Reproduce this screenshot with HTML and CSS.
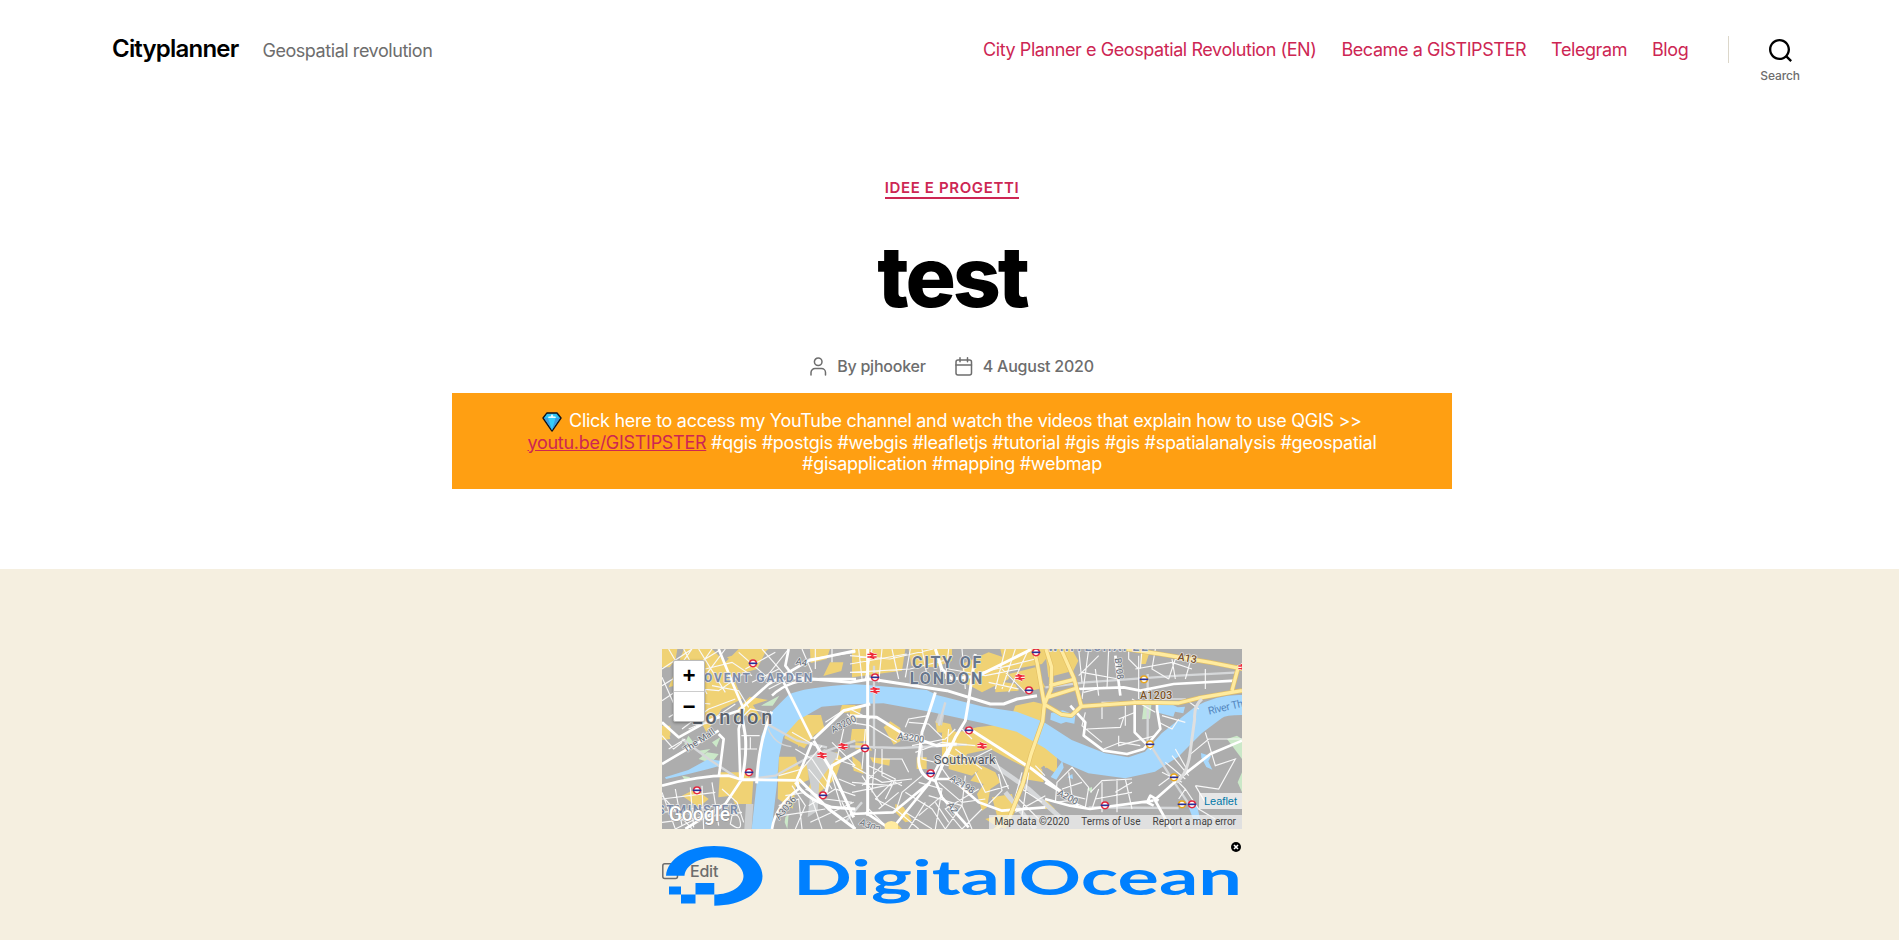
FILE: index.html
```html
<!DOCTYPE html>
<html lang="en">
<head>
<meta charset="utf-8">
<title>test – Cityplanner</title>
<link rel="stylesheet" href="styles.css">
</head>
<body>
<div class="page">
  <header class="site-header">
    <div class="titles">
      <a class="site-title">Cityplanner</a>
      <span class="site-description">Geospatial revolution</span>
    </div>
    <nav class="menu">
      <a>City Planner e Geospatial Revolution (EN)</a>
      <a>Became a GISTIPSTER</a>
      <a>Telegram</a>
      <a>Blog</a>
    </nav>
    <button class="search">
      <svg width="23" height="23" viewBox="0 0 23 23"><path d="M38.710696,48.0601792 L43,52.3494831 L41.3494831,54 L37.0601792,49.710696 C35.2632422,51.1481185 32.9839107,52.0076499 30.5038249,52.0076499 C24.7027226,52.0076499 20,47.3049272 20,41.5038249 C20,35.7027226 24.7027226,31 30.5038249,31 C36.3049272,31 41.0076499,35.7027226 41.0076499,41.5038249 C41.0076499,43.9839107 40.1481185,46.2632422 38.710696,48.0601792 Z M36.3875844,47.1716785 C37.8030221,45.7026647 38.6734666,43.7048964 38.6734666,41.5038249 C38.6734666,36.9918565 35.0157934,33.3341833 30.5038249,33.3341833 C25.9918565,33.3341833 22.3341833,36.9918565 22.3341833,41.5038249 C22.3341833,46.0157934 25.9918565,49.6734666 30.5038249,49.6734666 C32.7048964,49.6734666 34.7026647,48.8030221 36.1716785,47.3875844 Z" transform="translate(-20 -31)"/></svg>
      <span>Search</span>
    </button>
  </header>

  <section class="entry-header">
    <a class="category">Idee e progetti</a>
    <h1>test</h1>
    <ul class="meta">
      <li><svg width="17" height="19" viewBox="0 0 17 19" class="line"><path d="M1 18v-2.500a4 4 0 0 1 4-4h6.500a4 4 0 0 1 4 4V18"/><circle cx="8.200" cy="4.800" r="3.800"/></svg>By pjhooker</li>
      <li><svg width="18" height="19" viewBox="0 0 18 19" class="line"><rect x="1" y="3" width="15.500" height="15" rx="2"/><path d="M1 8h15.500M5 .8v4M12.500 .8v4"/></svg>4 August 2020</li>
    </ul>
    <p class="banner"><svg class="gem" width="20" height="20" viewBox="0 0 20 20"><path d="M5 1h10l4 5-9 13L1 6z" fill="#25b8ec" stroke="#10131c" stroke-width="1.400" stroke-linejoin="round"/><path d="M2 6h16l-8 12z" fill="#3c9ce0"/><path d="M6 6l4 12 3.500-12z" fill="#35cdfa"/><path d="M5 2h9l3 4H2.500z" fill="#2ec4f2"/><path d="M6 6l1-2 1 1 2-3 2 3 1-1 1 2z" fill="#e9fbff"/></svg> Click here to access my YouTube channel and watch the videos that explain how to use QGIS &gt;&gt;<br><a>youtu.be/GISTIPSTER</a> #qgis #postgis #webgis #leafletjs #tutorial #gis #gis #spatialanalysis #geospatial<br>#gisapplication #mapping #webmap</p>
  </section>

  <main class="content">
    <div class="map">
      <svg class="tiles" width="580" height="180" viewBox="0 0 1740 540">
        <defs>
          <g id="tube"><circle r="10" fill="#fff" stroke="#e32940" stroke-width="4.500"/><path d="M-13 0h26" stroke="#2b2f94" stroke-width="5"/></g>
          <g id="over"><circle r="10" fill="#fff" stroke="#e9a820" stroke-width="4.500"/><path d="M-13 0h26" stroke="#2b2f94" stroke-width="5"/></g>
          <g id="rail"><path d="M-14-4h28M-14 4h28M-7-9L6-4-6 4 7 9" fill="none" stroke="#fff" stroke-width="7"/><path d="M-14-4h28M-14 4h28M-7-9L6-4-6 4 7 9" fill="none" stroke="#ee2737" stroke-width="4"/></g>
        </defs>
        <rect width="1740" height="540" fill="#adadad"/>
        <g fill="#f0d274">
          <path d="M0 0h46l-5 30-18 25H0zM66 0h84l40 40 40-40h85l-30 60-70 20-40 50 10 20-60-10-30-45-75 20zM120 90l48 25 15 60-50 75-20-40-20-60zM0 230h25v30H0zM150 75l70 25 20 50-60 30zM195 25l80-25h45l-80 60zM444 0h60l-10 30-48 12zM504 40h40l-6 26-54 15z"/>
          <path d="M228 178l35-35 55 10-45 15 25 40-15 15-40-30-25 20zM377 218l40-20 60 0 10 40-30 20-30 40-60-30zM540 168h40v20l-48 5zM350 323h50l10 30 30-10v50l-38 16-10 70-45-30zM174 370h90v20h10l-5 75h-50l-10-25-40 5zM480 320l45-10 15 20-20 60-60 50-20-25zM400 260l30-10-20 45zM60 440l40-20 40 30-30 25zM0 250l20 0 5 20-25 3z"/>
          <path d="M570 0h160l-10 65-150 20zM740 0h130v35l-50 20-72-5zM900 45l80-35 60 20v60l-80 40-55-30zM1015 0h160l-35 45-110 20zM1040 75l80-20 30 60-60 15zM1000 95l60 10 10 20-70 5zM1060 170l55-12 30 8-5 54-95-10zM564 170l36 0-10 35-26 10zM665 235l20-18 30 20v40l-20 10z"/>
          <path d="M840 240l50 10 55-15 85-10 80 40 75 50v60l-40-25-25 20-70-35-65-35-70 15-10 30-65-10zM820 215l45 10 10 30-50-5zM570 240h50l-5 35-50 5zM580 280l40 5 10 20-50-5zM860 320l70 5 30 30-30 25-70-20zM960 350l40 20 15 30-30 20-10 55-15 10-15-50 20-30-40-10zM764 325h30v35h-30zM700 465l25 10 25 40-20 5-30-30zM670 540l10-15 20-5 20 20zM990 445l60-10 10 50-30 55-30-10-30-20 35-10zM1090 330l50 30 5 40-60-10z"/>
          <path d="M1149 300l32 15 3 30-35 12zM1149 450l30 30-30 0zM1149 0h80l20 35-15 30-75 20zM1436 15l25 0-10 30-14 0zM624 325l60 5-2 20-50-10zM570 320l25 20 10 35-30-10z"/>
        </g>
        <path d="M432 340l55-40 45 15-60 80-5 90-30 20 10-90zM252 465h22l-5 75h-22zM840 165l15-10-15 75-20-10z" fill="#cdcfd0"/>
        <g fill="#cbe8c8">
          <path d="M67 285l12-25 14 18-10 15zM110 305l35-5-25 20zM150 280l25-15-12 30zM110 330l25-20 35 5-20 25-22-4zM60 380l25 5-15 12zM297 170l55-30-20 30zM370 505l10-10-4 45-8-20zM1446 163l22 4-4 42-24 2zM1275 420l15-6 0 18zM1725 260l-30 10 45 60V270zM1727 400l13-30v60z"/>
        </g>
        <g fill="#a6d8fd">
          <path d="M269 540L284 403 297 263 329 188 379 138Q420 115 579 106L614 108 794 123 824 138 964 173 1064 188 1144 218 1229 273 1329 313 1399 325 1449 308 1499 253 1599 173Q1670 135 1740 138V198Q1690 198 1679 208L1619 253 1549 323 1479 368 1389 388 1279 373 1199 338 1149 298 1064 248 964 223 804 188 664 163 564 166 479 173 409 213 364 263 351 323 344 413 329 540z"/>
          <path d="M9 385l70-22 60-33 35 5 0 15-35 10-60 15-67 15zM1167 192l35-8 38 15-3 25-25-5-15 5-32-12zM1487 160h30l30 15 22-2-5 20-25-5-5 15-45-12zM1166 384l35-48 4 20-22 36zM1617 312l30 10-8 15 12 25-18-8-15-28zM1216 385l15-10 2 15zM1580 475l25-5 12 50-20 0z"/>
        </g>
        <g fill="none" stroke="#d6d8da" stroke-width="7">
          <path d="M60 270l80 60 90 60M230 395l110-15 100-55 140-50M564 292l150 5 200-10M636 50v250M830 230l20-70M1150 115l120-15 280-20 180-10M1280 475l270 2M1457 75v200l70 110 60 90M315 225l90 50 90 20M600 460l-50 60"/>
          <path d="M318 238q20 50 70 55" stroke-width="4"/>
          <path d="M970 330l130 90 100 90M1030 430l90 110" stroke-width="14"/>
        </g>
        <g fill="none" stroke="#f8f8f8" stroke-width="3.500">
          <path d="M0 60l90-60M0 110L170 5M20 0l75 130M65 0l70 135M110 0l80 130M0 85l40 90M40 40l50 110M0 155l60-40 110 10 80-55M20 205l75-45 50 5M130 60l80-20 60 40M150 110l80 15 30 50M230 10l80 70M250 60l90-50M270 100l80-40M300 0l70 80M320 120l60-30M380 0l-80 100M420 0l30 70M460 0v60M510 0v40M440 30l140-20M130 225l90-60M60 240l80-60 80-30M90 0l-50 70M150 0l-60 85M190 0l-60 80"/>
          <path d="M0 260l35 40 25-20M20 300l50-30M80 240l70-30M235 210l30-30 50 10M238 260h55M235 300h50M265 265v35M0 430l40 110M40 420l20 110M85 415l10 120M120 410l5 130M150 400l20 130M0 450l160-20M0 490l210-25M0 520l240-30M180 420l45 40 20 60M210 500q20-10 25 20t-30 5zM0 440l90 100M40 540l140-70"/>
          <path d="M350 380l70-20 60-70M370 440l60-10M400 300l50 30 60 90M390 250l70 40M350 470l60-20 10 90M360 500l130-20M390 410l40 60-30 70M430 420l60 30 80 10M440 470l80-50 60 20M445 520l130-60M450 450l30 90M520 330l60 20M530 390l50 20M500 350l40 130M510 280l70 70M545 240l-20 90M440 360l50 60M520 520l60-30M540 460l40 80M490 220l60-40M555 195l30 30"/>
          <path d="M564 45l170-30M564 20l120 10 130-30M590 0l10 90M630 0l-20 90M660 0l-10 100M690 0l20 90M745 0l-15 85M564 70l180-10 120-30M780 0l15 80M820 0l20 80M860 0l-10 90M900 0l10 120M1030 0l-30 120M1060 0l-40 120M1100 0l-60 130M960 70l160-40M860 60l110 20 100-20M980 100l90 20M1010 50l80 80"/>
          <path d="M564 180l60 30M564 220l60 10 80 50M610 240l-10 120M640 300l-10 130M660 330h60l20 40M660 300v80l60 30M570 350l90 50 90-10M570 400l120 10M600 380l60 90M620 350l80 40-30 60M570 430l150-30M640 450l50-50M650 480l60-50M660 350l-60 60M740 220l60 5 40 40M730 235l10-25 60-10M750 290l100-20 30-30M780 280v50l80 20M760 310l80-30 100 10M820 330l50 70M860 240l-10 100M900 240l30 30M850 310l60 30 80-40M880 300l80 60"/>
          <path d="M620 480l60 60M640 450l60 30 70 60M700 490l20-60 60-50M730 430l80 50 40 60M770 400l70 20-20 120M770 500l70-60M730 490l80 50M740 540l50-80M800 440l100 30-50 70M830 400l70 60 70-10M820 460l40 60M910 380l-10 90M940 370l30 60 70-20M900 540l-50-60 100-60M930 540l-30-70M960 480l-60 60M1010 375l10 50-40 40M1000 330l40 90M1080 370l-30 110M1080 420l60 40M1070 450l60 60M1100 370l-20 130M1120 350l29 30M1060 490l90-50"/>
          <path d="M1250 0l10 100M1280 0l-20 150M1310 20l-60 60M1260 70l110 20M1300 60l10 80M1340 0l-5 120M1400 0v30l30 30M1420 60l110-20 60 20M1440 0l-5 60M1480 0l-10 60 50 30M1530 30l10 60M1590 20l-20 70M1630 60v60M1430 20v130M1520 90l20-60 60 10M1265 130l60-15M1270 190l-10 40 60 50M1275 240l100-5 10-30M1320 210v-50h50M1370 260v30l110-30M1370 210l50-20M1390 170v60M1500 150h70l40 30M1500 200l70 20M1410 150l70 40M1325 300l50-20 60 10M1490 220l40 20 20-30"/>
          <path d="M1185 400l45-45 50 60-10 60-50-20-40 5zM1200 420l60-20M1220 370l10 70 40 10M1285 430l35-35 90-5M1320 400v90M1365 390v100M1390 390l20 90M1410 400l-50 30M1300 450l110-20M1290 480l20-60M1510 340l60 50M1530 320l50 60M1500 370l60 30M1540 300l40 70M1490 410l40-30 40 40-20 30M1580 320l60-50 100 0M1630 250l30 100 60-20-50 90-70-10M1570 420l40 60 50 30M1600 410l30 50"/>
        </g>
        <g fill="none" stroke="#fff" stroke-width="8" stroke-linejoin="round">
          <path d="M170 0l45 110 30 70-15 60 5 150M0 220l50 45 90-50 90-30 90-80 120-70 140-30M0 345l170-100M170 255l15 15-10 80-5 35M0 410q110-30 200-30l40 12 165 2M240 390l-50 75-120 75M360 90l90 180M450 280l-45 110 5 30q-70 50-80 120M380 0l-10 50 30 40M330 140q50-50 150-50l102 0"/>
          <path d="M240 390q15-70 10-130M250 260l-10-60M284 403q5-120 45-215M455 275l60 100 60 130M455 270l90-85 80-20M410 390l90 90 80 60M490 440l20-90 110-60M400 400q30 50 110 75l70 5" stroke-width="9"/>
          <path d="M390 85l175 15 60-10 230 35 130 40 40 0 40-15 60-10M820 0l20 60 30 30 80-10 100-50 60-30M617 0v500M564 200l80 5 80 50 100 35 60-5M820 130q-15 50-40 120l-10 80q0 55 50 65l60-130 30-50 10-60 20-140M915 235l55 35 140 90 90 70" stroke-width="9"/>
          <path d="M870 285l-40 60-30 60-110 135M564 495l130-5 110-90M610 490l75 50M820 395l20 50 80 90M820 390h50l80 70 70 25 130-10" stroke-width="8"/>
          <path d="M1149 450l75 20 60 10 190-25M1149 400l60 35 40 35M1475 455l80-70 90-70 95-40M1477 450l50 90M1225 170l45 50-5 40 60 45 70 10 50-15 50-60-10-60V160M1418 160v90l50 50M1245 120l140-5 50 10 100-20 185-10M1490 455l-25-15-10 20 20 10M1375 140l-15-120" stroke-width="8"/>
        </g>
        <g fill="none" stroke-linejoin="round">
          <path d="M1258 172l172-12 120 2 60-15 130-22M1394 0l100 15 150 25 100 20M1162 110l72-18M1155 145l90-28M1197 0l39 88 22 84-30 28-30-4-51-30M1152 0l17 55-2 65-20 46M1115 0l10 40 22 126-5 50-35 100-25 90-40 100-70 60M1730 50l-20 75" stroke="#e4c064" stroke-width="14"/>
          <path d="M1258 172l172-12 120 2 60-15 130-22M1394 0l100 15 150 25 100 20M1162 110l72-18M1155 145l90-28M1197 0l39 88 22 84-30 28-30-4-51-30M1152 0l17 55-2 65-20 46M1115 0l10 40 22 126-5 50-35 100-25 90-40 100-70 60M1730 50l-20 75" stroke="#ffeb9f" stroke-width="10"/>
          <path d="M1620 150q-25 20-22 60l-15 110q-10 60-40 80" stroke="#dfdfdf" stroke-width="9"/>
        </g>
        <path d="M668 525q20-18 40 0v15h-40z" fill="#ffeb9f"/>
        <g class="labels" stroke="#e8e8e8" stroke-width="4" stroke-linejoin="round">
          <text x="97" y="98" font-size="36" font-weight="700" fill="#7b8ba8" textLength="354">COVENT GARDEN</text>
          <text x="89" y="224" font-size="60" font-weight="500" fill="#59626e" textLength="242">London</text>
          <text x="-40" y="494" font-size="36" font-weight="700" fill="#7b8ba8" textLength="267">ESTMINSTER</text>
          <text x="750" y="57" font-size="48" font-weight="700" fill="#68778d" textLength="208">CITY OF</text>
          <text x="743" y="105" font-size="48" font-weight="700" fill="#68778d" textLength="218">LONDON</text>
          <text x="1157" y="7" font-size="36" font-weight="700" fill="#7b8ba8" textLength="300">WHITECHAPEL</text>
          <text x="815" y="346" font-size="39" fill="#4e565f" textLength="186">Southwark</text>
          <g fill="#5f6873" font-size="28">
            <text transform="translate(400 45) rotate(12)">A4</text>
            <text transform="translate(72 312) rotate(-34)">The Mall</text>
            <text transform="translate(513 252) rotate(-27)">A3200</text>
            <text transform="translate(705 270) rotate(8)">A3200</text>
            <text transform="translate(352 514) rotate(-50)">A3036</text>
            <text transform="translate(862 392) rotate(32)">A2198</text>
            <text transform="translate(854 468) rotate(55)">A2</text>
            <text transform="translate(590 526) rotate(24)">A302</text>
            <text transform="translate(1184 437) rotate(28)">A200</text>
            <text transform="translate(1358 28) rotate(83)">B108</text>
          </g>
          <g fill="#7a5126" font-size="32" font-weight="500"><text transform="translate(1546 33) rotate(10)">A13</text><text x="1434" y="151" textLength="97">A1203</text></g>
          <text transform="translate(1641 197) rotate(-13)" font-size="32" fill="#5487bd" stroke="none" textLength="150">River Tham</text>
        </g>
        <use href="#tube" x="273" y="43"/><use href="#tube" x="261" y="370"/><use href="#tube" x="105" y="424"/><use href="#tube" x="483" y="439"/><use href="#tube" x="639" y="85"/><use href="#tube" x="609" y="298"/><use href="#tube" x="806" y="373"/><use href="#tube" x="921" y="244"/><use href="#tube" x="1101" y="124"/><use href="#tube" x="1122" y="10"/><use href="#tube" x="1329" y="469"/><use href="#tube" x="1590" y="466"/>
        <use href="#over" x="1446" y="91"/><use href="#over" x="1464" y="286"/><use href="#over" x="1536" y="385"/><use href="#over" x="1560" y="466"/>
        <use href="#rail" x="480" y="319"/><use href="#rail" x="543" y="292"/><use href="#rail" x="630" y="20"/><use href="#rail" x="639" y="124"/><use href="#rail" x="1074" y="85"/><use href="#rail" x="960" y="290"/><use href="#rail" x="1743" y="55"/>
        <text x="20" y="516" class="brand" textLength="184">Google</text>
      </svg>
      <div class="zoom-control"><a>+</a><a>−</a></div>
      <div class="leaflet">Leaflet</div>
      <div class="credits"><span>Map data ©2020</span><span>Terms of Use</span><span>Report a map error</span></div>
    </div>
    <div class="below">
      <p class="edit"><svg width="17" height="17" viewBox="0 0 17 17" class="line"><rect x=".8" y=".8" width="14.700" height="14.700" rx="2"/></svg>Edit</p>
      <svg class="sponsor" width="580" height="72" viewBox="0 0 580 72">
        <g fill="#0080ff">
          <path d="M52.300 69.700V58.500C69 58.500 81.500 50 81.500 40 81.500 29.500 68.500 21.500 52.500 21.500 36.500 21.500 23.500 29.500 22.500 39.800H4C5.500 22.500 26 10 52 10 79 10 100.500 23 100.500 40S79 69.700 52.300 69.700z"/>
          <path d="M33.500 47h18.800v11.500H33.500zM19 58.500h14.500v9H19zM7 50.500h12v8H7z"/>
          <text x="131" y="58.500" textLength="449" lengthAdjust="spacingAndGlyphs">DigitalOcean</text>
        </g>
      </svg>
      <svg class="close" width="10" height="10" viewBox="0 0 10 10"><circle cx="5" cy="5" r="5"/><path d="M3 3l4 4M7 3L3 7" stroke="#fff" stroke-width="1.600"/></svg>
    </div>
  </main>
</div>
</body>
</html>
```
FILE: styles.css
```css
* { box-sizing: border-box; }
html, body { margin: 0; }
body {
  height: 940px;
  overflow: hidden;
  background: #fff;
  color: #000;
  font-family: Inter, "Liberation Sans", sans-serif;
  font-size: 18px;
}
.page { width: 1904px; height: 940px; display: flex; flex-direction: column; }

.site-header {
  display: flex;
  height: 100px;
  padding: 0 104px 0 112px;
}
.titles { display: flex; align-items: baseline; margin: 34px auto 0 0; }
.site-title { font-size: 24px; font-weight: 600; line-height: 30px; letter-spacing: -0.8px; }
.site-description { margin-left: 24px; font-size: 18px; font-weight: 400; color: #6d6d6d; letter-spacing: -0.44px; }
.menu { display: flex; gap: 25px; margin-top: 39px; line-height: 22px; letter-spacing: -0.42px; color: #cd2653; }
.search {
  display: flex;
  flex-direction: column;
  align-items: center;
  position: relative;
  margin: 39px 0 0 72px;
  padding: 0;
  border: 0;
  background: none;
  color: #6d6d6d;
  font: 500 12px/15px Inter, sans-serif;
  letter-spacing: -0.1px;
}
.search::before { content: ""; position: absolute; left: -32px; top: -3px; width: 1px; height: 27px; background: #dcd7ca; }
.search span { margin-top: 6px; }

.entry-header {
  display: flex;
  flex-direction: column;
  align-items: center;
  height: 469px;
  padding-top: 79px;
}
.category {
  border-bottom: 2px solid #cd2653;
  color: #cd2653;
  font-size: 15px;
  font-weight: 600;
  line-height: 18px;
  letter-spacing: 0.63px;
  text-transform: uppercase;
}
h1 { margin: 30px 0 0; font-size: 84px; font-weight: 800; line-height: 96px; letter-spacing: -3.1px; }
.meta {
  display: flex;
  gap: 29px;
  margin: 31px 0 0;
  padding: 0;
  list-style: none;
  color: #6d6d6d;
  font-size: 16px;
  font-weight: 450;
  line-height: 20px;
  letter-spacing: -0.22px;
}
.meta li { display: flex; align-items: center; gap: 10px; }
.line { fill: none; stroke: #6d6d6d; stroke-width: 1.5; stroke-linecap: round; }
.banner {
  width: 1000px;
  height: 96px;
  margin: 17px 0 0;
  padding-top: 17px;
  background: #ff9f12;
  color: #fff;
  text-align: center;
  line-height: 21.6px;
  letter-spacing: -0.29px;
  white-space: nowrap;
}
.banner a { color: #cd2653; text-decoration: underline; }
.gem { vertical-align: -3px; margin: -4px 2px -2px 0; }

.content { flex: 1; padding: 80px 662px 0; background: #f5efe0; }
.map { position: relative; height: 180px; }
.tiles { display: block; overflow: hidden; }
.tiles text { font-family: Roboto, sans-serif; paint-order: stroke; }
.brand { font-size: 58px; font-weight: 500; fill: #fff; stroke: #8c8c8c; stroke-width: 3px; }
.zoom-control {
  position: absolute;
  left: 11px;
  top: 11px;
  width: 32px;
  border-radius: 2px;
  border: 1px solid #bbb;
  background: #fff;
  box-shadow: 0 1px 3px rgba(0, 0, 0, .35);
}
.zoom-control a { display: block; height: 30px; padding-top: 2px; font: bold 22px/30px "Liberation Mono", monospace; text-align: center; }
.zoom-control a + a { border-top: 1px solid #ccc; }
.leaflet {
  position: absolute;
  right: 0;
  top: 144px;
  padding: 0 5px;
  background: rgba(255, 255, 255, .7);
  color: #0078a8;
  font: 11px/16px "Liberation Sans", sans-serif;
}
.credits {
  position: absolute;
  right: 0;
  bottom: 0;
  display: flex;
  gap: 12px;
  padding: 0 6px 0 5px;
  background: rgba(245, 245, 245, .7);
  color: #444;
  font: 10px/14px Roboto, sans-serif;
}
.below { position: relative; padding-top: 32px; }
.edit { display: flex; align-items: center; gap: 11px; margin: 0; color: #6d6d6d; font-size: 16px; font-weight: 450; line-height: 20px; letter-spacing: -0.22px; }
.sponsor { position: absolute; left: 0; top: 7px; }
.sponsor text { font: 700 47px Lato, sans-serif; }
.close { position: absolute; right: 1px; top: 13px; }
```
